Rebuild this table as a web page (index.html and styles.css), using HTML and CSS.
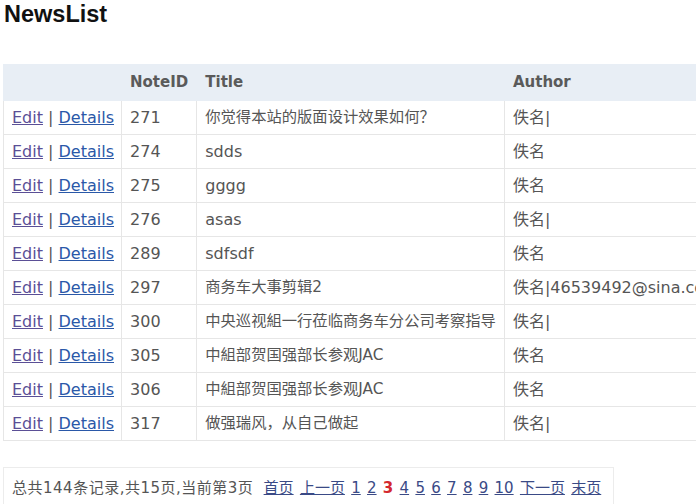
FILE: index.html
```html
<!DOCTYPE html>
<html lang="zh">
<head>
<meta charset="utf-8">
<title>NewsList</title>
<link rel="stylesheet" href="styles.css">
</head>
<body>
<h2 class="page-title">NewsList</h2>
<table class="grid">
  <thead>
    <tr><th></th><th>NoteID</th><th>Title</th><th>Author</th></tr>
  </thead>
  <tbody>
    <tr><td class="ops"><a class="edit" href="#">Edit</a> | <a class="det" href="#">Details</a></td><td>271</td><td class="cjk">你觉得本站的版面设计效果如何？</td><td>佚名|</td></tr>
    <tr><td class="ops"><a class="edit" href="#">Edit</a> | <a class="det" href="#">Details</a></td><td>274</td><td>sdds</td><td>佚名</td></tr>
    <tr><td class="ops"><a class="edit" href="#">Edit</a> | <a class="det" href="#">Details</a></td><td>275</td><td>gggg</td><td>佚名</td></tr>
    <tr><td class="ops"><a class="edit" href="#">Edit</a> | <a class="det" href="#">Details</a></td><td>276</td><td>asas</td><td>佚名|</td></tr>
    <tr><td class="ops"><a class="edit" href="#">Edit</a> | <a class="det" href="#">Details</a></td><td>289</td><td>sdfsdf</td><td>佚名</td></tr>
    <tr><td class="ops"><a class="edit" href="#">Edit</a> | <a class="det" href="#">Details</a></td><td>297</td><td class="cjk">商务车大事剪辑2</td><td>佚名|46539492@sina.com</td></tr>
    <tr><td class="ops"><a class="edit" href="#">Edit</a> | <a class="det" href="#">Details</a></td><td>300</td><td class="cjk">中央巡视組一行莅临商务车分公司考察指导</td><td>佚名|</td></tr>
    <tr><td class="ops"><a class="edit" href="#">Edit</a> | <a class="det" href="#">Details</a></td><td>305</td><td class="cjk">中組部贺国强部长参观JAC</td><td>佚名</td></tr>
    <tr><td class="ops"><a class="edit" href="#">Edit</a> | <a class="det" href="#">Details</a></td><td>306</td><td class="cjk">中組部贺国强部长参观JAC</td><td>佚名</td></tr>
    <tr><td class="ops"><a class="edit" href="#">Edit</a> | <a class="det" href="#">Details</a></td><td>317</td><td class="cjk">做强瑞风，从自己做起</td><td>佚名|</td></tr>
  </tbody>
</table>
<div class="pager">
  <span class="info">总共144条记录,共15页,当前第3页</span>
  <a href="#" class="first">首页</a> <a href="#">上一页</a> <a href="#">1</a> <a href="#">2</a> <span class="cur">3</span> <a href="#">4</a> <a href="#">5</a> <a href="#">6</a> <a href="#">7</a> <a href="#">8</a> <a href="#">9</a> <a href="#">10</a> <a href="#">下一页</a> <a href="#">末页</a>
</div>
</body>
</html>
```
FILE: styles.css
```css
html { overflow: hidden; }
body {
  margin: 0;
  padding: 0 3px;
  background: #fff;
  font-family: "DejaVu Sans", "Noto Sans CJK SC", sans-serif;
  font-size: 16px;
  color: #555;
}
.page-title {
  margin: 0 0 36px 1px;
  font-family: "Liberation Sans", Arial, sans-serif;
  font-size: 23.5px;
  line-height: 28px;
  font-weight: bold;
  color: #111;
}
.grid {
  border-collapse: collapse;
  white-space: nowrap;
}
.grid th {
  background: #e8eef5;
  color: #5a5a5a;
  font-size: 15px;
  font-weight: bold;
  text-align: left;
  padding: 8px 8px;
  line-height: 19px;
  border: 1px solid #e8eef5;
}
.grid th:first-child { padding-right: 7px; }
.grid td {
  padding: 7px 8px;
  line-height: 19px;
  border: 1px solid #e6e6e6;
  color: #555;
}
.grid td.ops { padding-right: 7px; }
.grid td.cjk { font-size: 15.3px; }
.grid a { text-decoration: underline; }
.grid a.edit { color: #5b4f96; }
.grid a.det { color: #2a58a8; }
.pager {
  display: inline-block;
  margin-top: 26px;
  padding: 10px 12px 12px 8px;
  border: 1px solid #ececec;
  font-size: 15px;
  line-height: 20px;
  word-spacing: 1.5px;
  color: #555;
  white-space: nowrap;
}
.pager .info { margin-right: 4px; letter-spacing: 0.5px; }
.pager a { color: #3a4a86; text-decoration: underline; }
.pager .cur { color: #d4282e; font-weight: bold; }
```
